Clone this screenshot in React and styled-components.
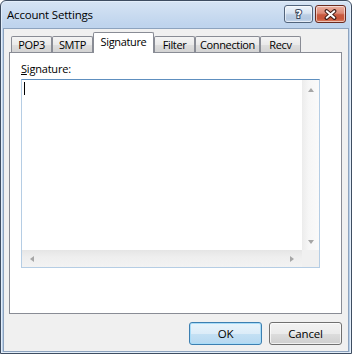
import React from 'react';
import styled, { createGlobalStyle } from 'styled-components';

const Global = createGlobalStyle`
  html, body { margin: 0; padding: 0; background: #ffffff; }
  body { font-family: "Segoe UI", "Open Sans", "Noto Sans", sans-serif; font-size: 11px; color: #000; letter-spacing: -0.2px; }
  * { box-sizing: border-box; }
`;

const Window = styled.div`
  width: 352px;
  height: 354px;
  display: flex;
  flex-direction: column;
  border: 1px solid #3e4d61;
  border-radius: 6px 6px 0 0;
  background: linear-gradient(#d6e4f4, #bfd4ed 24px, #b8cfe9);
  box-shadow: inset 0 0 0 1px #e3eefa;
  overflow: hidden;
`;

const TitleBar = styled.div`
  height: 27px;
  display: flex;
  align-items: center;
  padding: 0 5px 0 6px;
`;

const Title = styled.div`
  flex: 1;
  font-size: 11.5px;
  line-height: 16px;
  color: #000;
`;

const Captions = styled.div`
  display: flex;
  gap: 2px;
  align-self: flex-start;
  margin-top: 4px;
`;

const CaptionButton = styled.div`
  width: ${p => p.$w}px;
  height: 18px;
  border: 1px solid ${p => (p.$close ? '#6b2b20' : '#52647c')};
  border-radius: 3px;
  display: flex;
  align-items: center;
  justify-content: center;
  background: ${p =>
    p.$close
      ? 'linear-gradient(#eab0a2, #dd8a76 45%, #c85a40 55%, #c9563a 80%, #dc8264)'
      : 'linear-gradient(#eef4fb, #d8e4f2 45%, #bccee4 55%, #b4c8e0 80%, #c8d8ec)'};
  box-shadow: inset 0 0 0 1px rgba(255, 255, 255, 0.55);
`;

const HelpGlyph = styled.span`
  font-family: "DejaVu Sans", sans-serif;
  font-weight: bold;
  font-size: 11px;
  line-height: 11px;
  color: #fff;
  -webkit-text-stroke: 2px #3a4a60;
  paint-order: stroke fill;
`;

const Client = styled.div`
  flex: 1;
  display: flex;
  flex-direction: column;
  margin: 0 2px 1px 2px;
  border: 1px solid #8da3be;
  background: #f0f0f0;
  padding: 3px 6px 6px 5px;
`;

const TabRow = styled.div`
  display: flex;
  align-items: flex-end;
  height: 21px;
  padding-left: 2px;
  margin-bottom: -1px;
  position: relative;
  z-index: 1;
`;

const Tab = styled.div`
  width: ${p => p.$w}px;
  height: ${p => (p.$active ? 21 : 16)}px;
  margin-bottom: ${p => (p.$active ? 0 : 1)}px;
  border: 1px solid #898c95;
  border-bottom: none;
  border-radius: 2px 2px 0 0;
  background: ${p =>
    p.$active ? '#ffffff' : 'linear-gradient(#f4f4f4, #eaeaea 50%, #dedede 51%, #d3d3d3)'};
  display: flex;
  justify-content: center;
  align-items: ${p => (p.$active ? 'flex-start' : 'center')};
  padding-top: ${p => (p.$active ? 2 : 0)}px;
  font-size: 11px;
  letter-spacing: -0.35px;
  line-height: 14px;
  white-space: nowrap;
`;

const Panel = styled.div`
  height: 262px;
  border: 1px solid #898c95;
  background: #ffffff;
  padding: 8px 0 0 11px;
`;

const Label = styled.div`
  line-height: 16px;
  font-size: 11px;
  u { text-decoration: underline; }
`;

const TextBox = styled.div`
  width: 299px;
  height: 189px;
  margin-top: 2px;
  border: 1px solid #b5cde4;
  border-top-color: #5e8fbf;
  display: grid;
  grid-template-columns: 1fr 17px;
  grid-template-rows: 1fr 17px;
  background: #fff;
`;

const EditArea = styled.div`
  padding: 2px 0 0 2px;
`;

const Caret = styled.div`
  width: 1px;
  height: 13px;
  background: #000;
`;

const VScroll = styled.div`
  display: flex;
  flex-direction: column;
  justify-content: space-between;
  align-items: center;
  padding: 8px 0 6px;
  background: linear-gradient(to right, #ececec, #f6f6f6 40%, #fafafa);
`;

const HScroll = styled.div`
  display: flex;
  justify-content: space-between;
  align-items: center;
  padding: 0 8px;
  background: linear-gradient(#e5e5e5, #eeeeee 40%, #f3f3f3);
`;

const Corner = styled.div`
  background: #f0f0f0;
`;

const Arrow = styled.div`
  width: 0;
  height: 0;
  border-style: solid;
  ${p =>
    p.$dir === 'up'
      ? 'border-width: 0 3.5px 4px 3.5px; border-color: transparent transparent #a6a6a6 transparent;'
      : p.$dir === 'down'
      ? 'border-width: 4px 3.5px 0 3.5px; border-color: #a6a6a6 transparent transparent transparent;'
      : p.$dir === 'left'
      ? 'border-width: 3.5px 4px 3.5px 0; border-color: transparent #a6a6a6 transparent transparent;'
      : 'border-width: 3.5px 0 3.5px 4px; border-color: transparent transparent transparent #a6a6a6;'}
`;

const ButtonRow = styled.div`
  display: flex;
  justify-content: flex-end;
  gap: 7px;
  margin-top: 8px;
`;

const Button = styled.div`
  width: 73px;
  height: 23px;
  border: 1px solid ${p => (p.$default ? '#3c7fb1' : '#707070')};
  border-radius: 3px;
  display: flex;
  align-items: center;
  justify-content: center;
  font-size: 11.5px;
  background: ${p =>
    p.$default
      ? 'linear-gradient(#e8f4fc, #dcecf8 50%, #c4e0f4 51%, #b6d8f0)'
      : 'linear-gradient(#f2f2f2, #ebebeb 50%, #dddddd 51%, #cfcfcf)'};
  box-shadow: inset 0 0 0 1px ${p => (p.$default ? '#a8dcf8' : 'rgba(255,255,255,0.7)')};
`;

const tabs = [
  { label: 'POP3', w: 41 },
  { label: 'SMTP', w: 41 },
  { label: 'Signature', w: 61, active: true },
  { label: 'Filter', w: 41 },
  { label: 'Connection', w: 65 },
  { label: 'Recv', w: 41 },
];

export default function App() {
  return (
    <>
      <Global />
      <Window>
        <TitleBar>
          <Title>Account Settings</Title>
          <Captions>
            <CaptionButton $w={29}>
              <HelpGlyph>?</HelpGlyph>
            </CaptionButton>
            <CaptionButton $w={31} $close>
              <svg width="13" height="11" viewBox="0 0 13 11">
                <path d="M2.5 2 L10.5 9 M10.5 2 L2.5 9" stroke="#3b1a14" strokeWidth="3.8" strokeLinecap="round" />
                <path d="M2.7 2.2 L10.3 8.8 M10.3 2.2 L2.7 8.8" stroke="#fff" strokeWidth="2" strokeLinecap="round" />
              </svg>
            </CaptionButton>
          </Captions>
        </TitleBar>
        <Client>
          <TabRow>
            {tabs.map(t => (
              <Tab key={t.label} $w={t.w} $active={t.active}>
                {t.label}
              </Tab>
            ))}
          </TabRow>
          <Panel>
            <Label>
              <u>S</u>ignature:
            </Label>
            <TextBox>
              <EditArea>
                <Caret />
              </EditArea>
              <VScroll>
                <Arrow $dir="up" />
                <Arrow $dir="down" />
              </VScroll>
              <HScroll>
                <Arrow $dir="left" />
                <Arrow $dir="right" />
              </HScroll>
              <Corner />
            </TextBox>
          </Panel>
          <ButtonRow>
            <Button $default>OK</Button>
            <Button>Cancel</Button>
          </ButtonRow>
        </Client>
      </Window>
    </>
  );
}
